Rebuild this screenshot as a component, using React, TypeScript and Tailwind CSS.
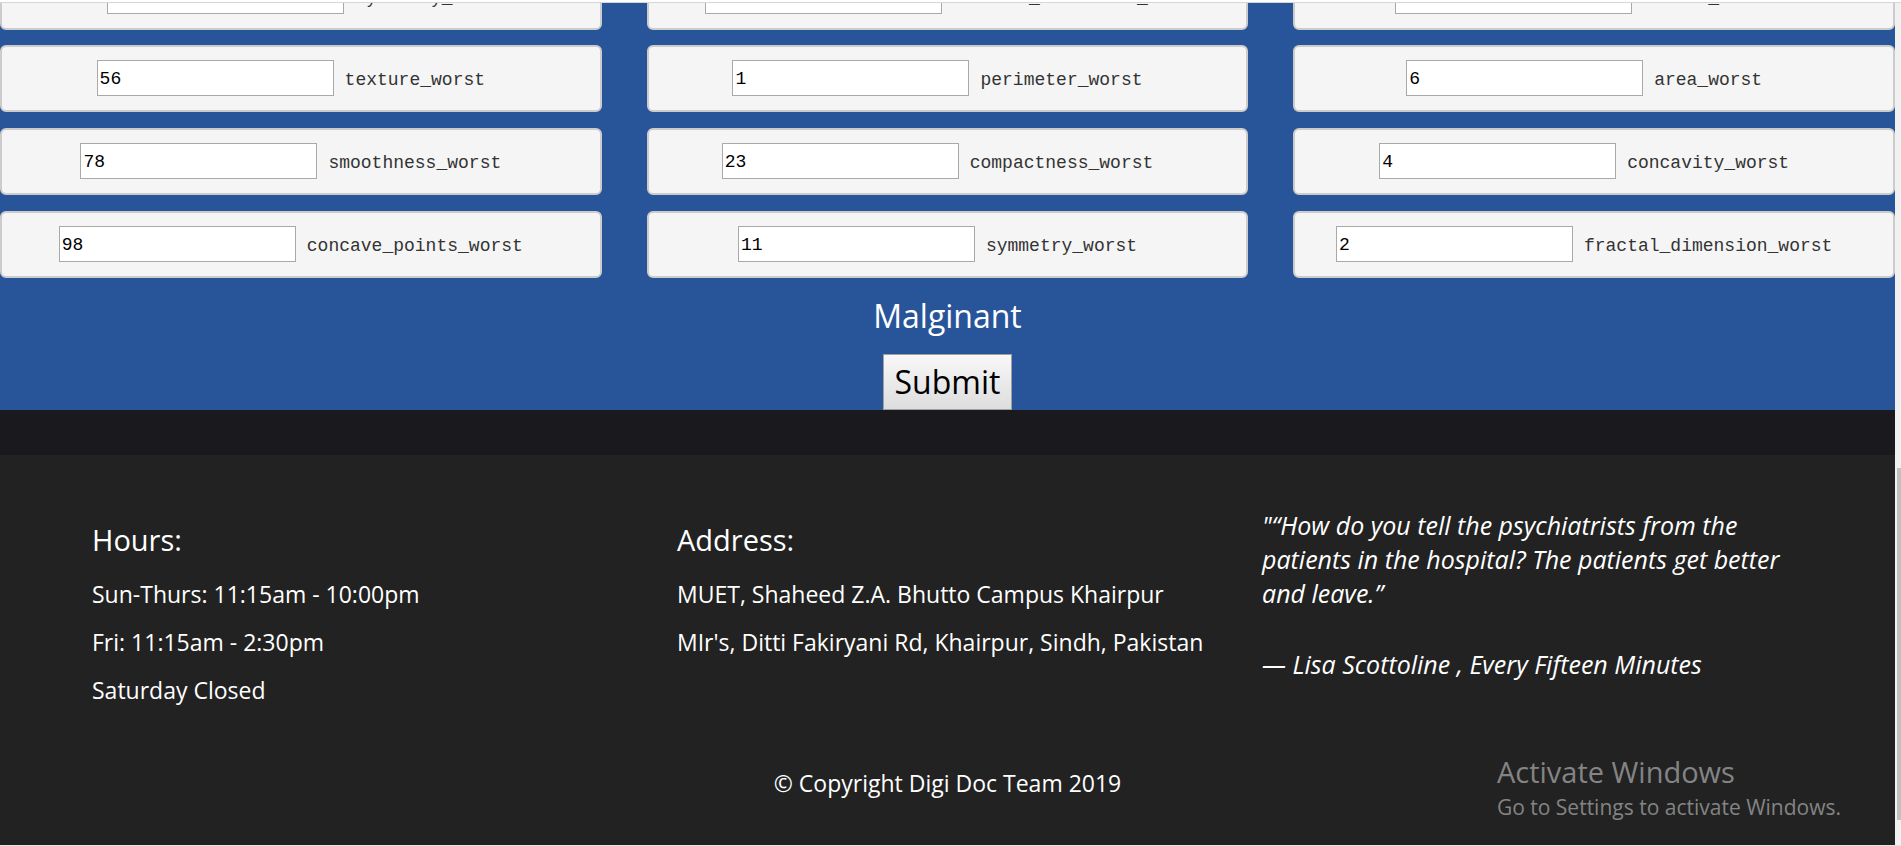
type Field = { name: string; value: string };

const topFields: Field[] = [
  { name: "symmetry_se", value: "" },
  { name: "fractal_dimension_se", value: "" },
  { name: "radius_worst", value: "" },
];

const fields: Field[] = [
  { name: "texture_worst", value: "56" },
  { name: "perimeter_worst", value: "1" },
  { name: "area_worst", value: "6" },
  { name: "smoothness_worst", value: "78" },
  { name: "compactness_worst", value: "23" },
  { name: "concavity_worst", value: "4" },
  { name: "concave_points_worst", value: "98" },
  { name: "symmetry_worst", value: "11" },
  { name: "fractal_dimension_worst", value: "2" },
];

function FieldCard({ name, value }: Field) {
  return (
    <div className="flex items-center justify-center rounded-md border-2 border-[#ccc] bg-[#f5f5f5] pt-[13px] pb-[14px] pr-[10px] font-['Liberation_Mono',monospace] text-lg/6">
      <input
        id={name}
        name={name}
        type="text"
        defaultValue={value}
        className="h-9 w-[237px] border border-[#a9a9a9] bg-white px-0.5 pt-0.5 text-black outline-none"
      />
      <label htmlFor={name} className="pt-1 pr-[10px] pl-[11px] text-[#333]">
        {name}
      </label>
    </div>
  );
}

function FieldGrid({ items }: { items: Field[] }) {
  return (
    <div className="grid w-full grid-cols-3 gap-x-[45px] gap-y-4">
      {items.map((f) => (
        <FieldCard key={f.name} {...f} />
      ))}
    </div>
  );
}

export default function App() {
  return (
    <div className="min-h-screen bg-[#e4e4e4] font-['Open_Sans',sans-serif]">
      <div className="h-[3px] border-b border-[#d6d6d6] bg-white" />
      <div className="flex">
        <div className="min-w-0 flex-1">
          <form className="bg-[#28559a]" onSubmit={(e) => e.preventDefault()}>
            <div className="mb-[15px] flex h-[27px] items-end overflow-hidden">
              <FieldGrid items={topFields} />
            </div>
            <FieldGrid items={fields} />
            <div className="flex flex-col items-center pt-[6px] text-[32px]">
              <p className="mb-[6px] leading-[64px] text-white">Malginant</p>
              <button
                type="submit"
                className="border border-[#a0a0a0] bg-linear-to-b from-[#f8f8f8] to-[#dddddd] px-[11px] leading-[54px] text-black"
              >
                Submit
              </button>
            </div>
          </form>
          <div className="h-[45px] bg-[#1a191e]" />
          <footer className="relative bg-[#222] px-[70px] pb-[45px] text-[23px]/[34px] text-white">
            <div className="grid grid-cols-3">
              <section className="px-[22px] pt-[65px]">
                <h4 className="mb-[17px] text-[29px]/[40px]">Hours:</h4>
                <p className="mb-[14px]">Sun-Thurs: 11:15am - 10:00pm</p>
                <p className="mb-[14px]">Fri: 11:15am - 2:30pm</p>
                <p>Saturday Closed</p>
              </section>
              <section className="pt-[65px] pl-[22px]">
                <h4 className="mb-[17px] text-[29px]/[40px]">Address:</h4>
                <p className="mb-[14px]">MUET, Shaheed Z.A. Bhutto Campus Khairpur</p>
                <p>MIr's, Ditti Fakiryani Rd, Khairpur, Sindh, Pakistan</p>
              </section>
              <section className="px-[22px] pt-[53px] text-[25px]/[34px] italic">
                <p className="mb-[37px]">
                  "“How do you tell the psychiatrists from the patients in the hospital? The patients get better and
                  leave.”
                </p>
                <p>— Lisa Scottoline , Every Fifteen Minutes</p>
              </section>
            </div>
            <p className="mt-[59px] text-center">© Copyright Digi Doc Team 2019</p>
            <div className="absolute right-[54px] bottom-[22px] text-[#848484]">
              <p className="text-[29px]/[38px]">Activate Windows</p>
              <p className="text-[21px]/[32px]">Go to Settings to activate Windows.</p>
            </div>
          </footer>
        </div>
        <div className="flex w-1.5 shrink-0 flex-col bg-[#f1f1f1] pt-[465px] pb-[25px] pl-0.5">
          <div className="flex-1 bg-[#c1c1c1]" />
        </div>
      </div>
    </div>
  );
}
